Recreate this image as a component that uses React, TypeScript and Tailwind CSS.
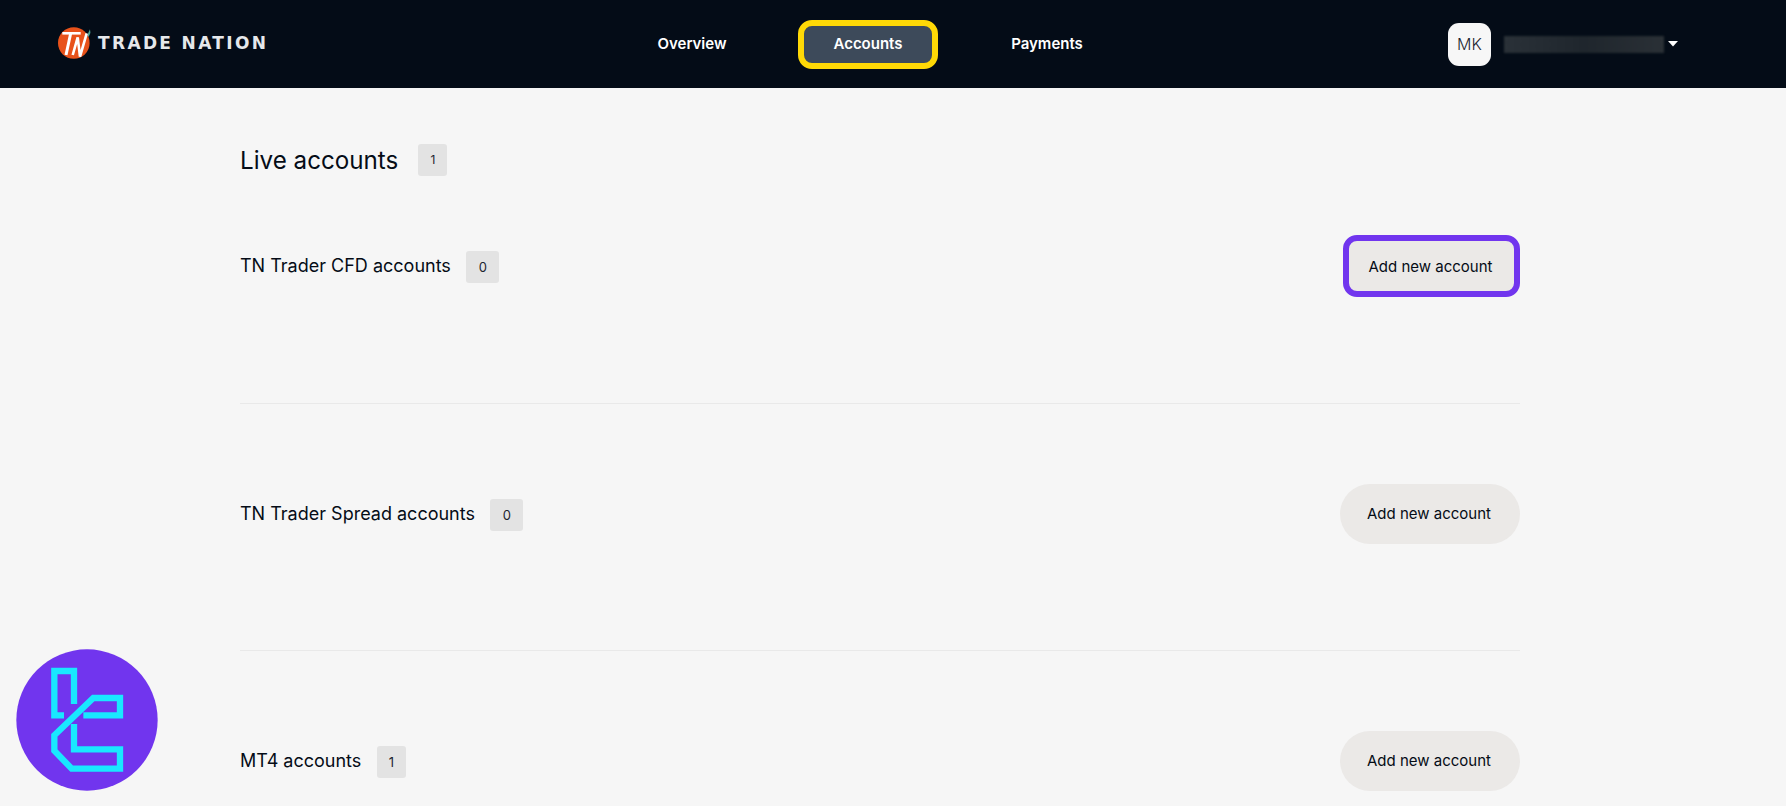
const rows = [
  { title: 'TN Trader CFD accounts', count: 0, highlight: true },
  { title: 'TN Trader Spread accounts', count: 0, highlight: false },
  { title: 'MT4 accounts', count: 1, highlight: false },
];

function CountBadge({ count, small }: { count: number; small?: boolean }) {
  return (
    <span
      className={`flex h-8 items-center justify-center rounded-[3px] bg-[#e3e3e3] text-[#1c2530] ${
        count === 1 ? 'w-[29px]' : 'w-[33px]'
      } ${small ? 'text-xs' : 'text-[13px]'}`}
    >
      {count}
    </span>
  );
}

function TradeNationLogo() {
  return (
    <div className="mb-[2px] flex items-center gap-[6px]">
      <svg width="34" height="34" viewBox="0 0 34 34" className="shrink-0">
        <circle cx="15.8" cy="17" r="15.8" fill="#e8521a" />
        <path d="M29.3 9 L32 3.3 L32.4 7 L30.5 11 Z" fill="#4fa89a" />
        <path d="M4.3 7.3 H22.7" stroke="#fff" strokeWidth="2.6" fill="none" />
        <path d="M12.7 7.3 L8 29" stroke="#fff" strokeWidth="3" fill="none" />
        <path d="M14.7 29 L19.7 11.3 L22 30.7 L28.7 7.3" stroke="#fff" strokeWidth="2.6" fill="none" />
      </svg>
      <span className="mt-[2px] font-['DejaVu_Sans',sans-serif] text-[17px] font-bold tracking-[2.35px] whitespace-nowrap text-[#e6e8ea]">
        TRADE NATION
      </span>
    </div>
  );
}

function NavBar() {
  return (
    <header className="flex h-[88px] items-center bg-[#040c17] pr-[108px] pl-[58px]">
      <div className="w-[563px]">
        <TradeNationLogo />
      </div>
      <nav className="flex items-center text-[15px] font-semibold text-white">
        <a className="mr-[35px] flex h-[49px] w-[142px] items-center justify-center">Overview</a>
        <a className="mr-[39px] flex h-[49px] w-[140px] items-center justify-center rounded-[14px] border-[6px] border-[#ffd906] bg-[#3d4a5a]">
          Accounts
        </a>
        <a className="flex h-[49px] w-[140px] items-center justify-center">Payments</a>
      </nav>
      <div className="ml-auto flex items-center">
        <div className="flex h-[43px] w-[43px] items-center justify-center rounded-[11px] bg-[#f7f7f7] text-base font-light text-[#1c2530]">
          MK
        </div>
        <div className="ml-[13px] h-[17px] w-[160px] bg-gradient-to-r from-[#2a3138] via-[#1f262d] to-[#2a3036] blur-[1px]" />
        <svg width="10" height="6" viewBox="0 0 10 6" className="ml-1">
          <path d="M0 0 H10 L5 5.5 Z" fill="#fff" />
        </svg>
      </div>
    </header>
  );
}

function TcBadge() {
  return (
    <svg
      width="142"
      height="142"
      viewBox="48 57 426 426"
      className="absolute top-[649px] left-[16px]"
    >
      <circle cx="261" cy="270" r="212" fill="#7135ee" />
      <g fill="none" stroke="#19e8ff" strokeWidth="19" strokeLinejoin="miter">
        <path d="M222 222 V123 H163 V256 H192" />
        <path d="M250 256 H360 V204 H280 L163 316 V362 L215 416 H360 V358 H222 V282" />
      </g>
    </svg>
  );
}

export default function App() {
  return (
    <div className="relative h-[806px] overflow-hidden bg-[#f6f6f6] font-['Inter',sans-serif] text-[#050c16]">
      <NavBar />
      <main className="pt-14 pr-[266px] pl-[240px]">
        <div className="flex items-start gap-[20px]">
          <h1 className="h-8 text-[24.2px] leading-[34px]">Live accounts</h1>
          <CountBadge count={1} small />
        </div>
        <div className="mt-[60px]">
          {rows.map((row) => (
            <section
              key={row.title}
              className="flex items-start justify-between border-b border-[#e9e9e9] pt-20 pb-[106px] first:pt-0 first:pb-[107px] last:border-b-0"
            >
              <div className="flex h-[60px] items-center gap-[15.5px] text-lg">
                <span>{row.title}</span>
                <span className="mt-[2px]">
                  <CountBadge count={row.count} />
                </span>
              </div>
              <button
                className={
                  row.highlight
                    ? '-mt-px -mb-px h-[62px] w-[177px] rounded-[14px] border-[6px] border-[#7135ee] bg-[#ebe9e7] pt-[2px] pr-[2px] text-[15px]'
                    : 'h-[60px] w-[180px] rounded-full bg-[#ebe9e7] pr-[2px] text-[15px]'
                }
              >
                Add new account
              </button>
            </section>
          ))}
        </div>
      </main>
      <TcBadge />
    </div>
  );
}
